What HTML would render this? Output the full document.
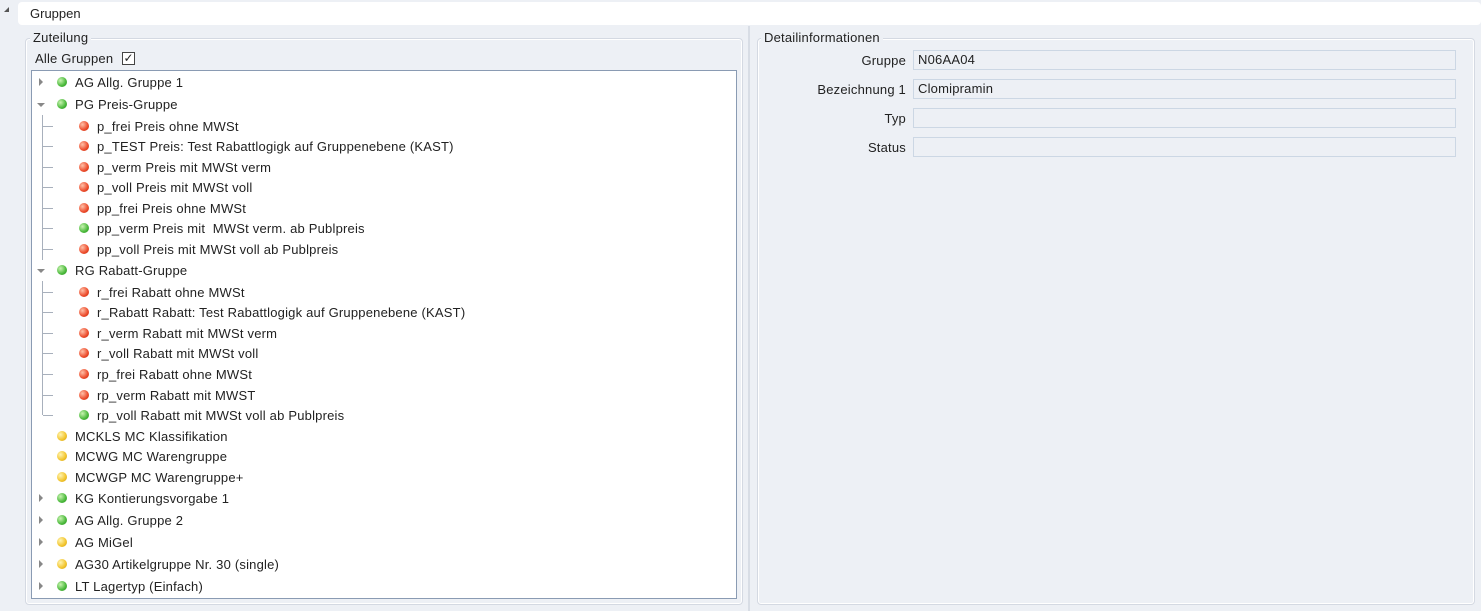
<!DOCTYPE html>
<html><head><meta charset="utf-8"><style>
*{margin:0;padding:0;box-sizing:border-box}
body{width:1481px;height:611px;background:#edf0f5;font-family:"Liberation Sans",sans-serif;font-size:13px;color:#222;position:relative;overflow:hidden}
.abs{position:absolute}
.hdr{left:18px;top:2px;width:1463px;height:23px;background:#fff;border-radius:4px}
.fs{border:1px solid #d4d9e2;border-radius:4px;box-shadow:inset 0 0 0 1px #fff}
.leg{background:#edf0f5;padding:0 3px;line-height:14px}
.tree{left:31px;top:70px;width:706px;height:529px;background:#fff;border:1px solid #8a9bb3}
.row{position:absolute;height:20px;line-height:20px;white-space:nowrap;letter-spacing:0.2px}
.dot{position:absolute;width:10px;height:10px;border-radius:50%}
.g{background:radial-gradient(circle at 35% 35%,#c8f4b0,#49b83a 60%,#2f8f25)}
.r{background:radial-gradient(circle at 35% 35%,#ffc0a8,#ec4a2a 60%,#b83010)}
.y{background:radial-gradient(circle at 35% 35%,#fff4b0,#f2c42c 60%,#c89810)}
.arr{position:absolute;width:0;height:0}
.ar{border-left:4px solid #888;border-top:4px solid transparent;border-bottom:4px solid transparent}
.ad{border-top:4px solid #888;border-left:4px solid transparent;border-right:4px solid transparent}
.vl{position:absolute;width:1px;background:#a8b0bc}
.hl{position:absolute;height:1px;width:10px;background:#a8b0bc}
.lbl{position:absolute;text-align:right;width:120px;left:786px;letter-spacing:0.2px}
.inp{position:absolute;left:913px;width:543px;height:20px;background:#edf0f5;border:1px solid #ccd7e4;padding-left:4px;line-height:18px;letter-spacing:0.2px}
</style></head><body>
<div class="abs" style="left:4px;top:7px;width:0;height:0;border-right:5px solid #555;border-top:5px solid transparent"></div>
<div class="abs hdr"></div>
<div class="abs" style="left:30px;top:6px">Gruppen</div>

<div class="abs fs" style="left:25px;top:38px;width:718px;height:567px"></div>
<div class="abs leg" style="left:30px;top:31px;letter-spacing:0.2px">Zuteilung</div>
<div class="abs" style="left:35px;top:51px;letter-spacing:0.2px">Alle Gruppen</div>
<div class="abs" style="left:122px;top:52px;width:13px;height:13px;border:1px solid #444;background:#fff;font-size:12px;line-height:11px;text-align:center">✓</div>
<div class="abs tree"></div>

<div class="abs" style="left:748px;top:26px;width:2px;height:585px;background:#d8dde5"></div>
<div class="abs fs" style="left:757px;top:38px;width:718px;height:567px"></div>
<div class="abs leg" style="left:761px;top:31px;letter-spacing:0.2px">Detailinformationen</div>
<div class="lbl" style="top:53px">Gruppe</div><div class="inp" style="top:50px">N06AA04</div>
<div class="lbl" style="top:82px">Bezeichnung 1</div><div class="inp" style="top:79px">Clomipramin</div>
<div class="lbl" style="top:111px">Typ</div><div class="inp" style="top:108px"></div>
<div class="lbl" style="top:140px">Status</div><div class="inp" style="top:137px"></div>

<div class="vl" style="left:42px;top:115px;height:145px"></div>
<div class="vl" style="left:42px;top:281px;height:134px"></div>

<div id="t"></div>
<script>
var rows=[
[82,0,'g','r','AG Allg. Gruppe 1'],
[104,0,'g','d','PG Preis-Gruppe'],
[126,1,'r','','p_frei Preis ohne MWSt'],
[146,1,'r','','p_TEST Preis: Test Rabattlogigk auf Gruppenebene (KAST)'],
[167,1,'r','','p_verm Preis mit MWSt verm'],
[187,1,'r','','p_voll Preis mit MWSt voll'],
[208,1,'r','','pp_frei Preis ohne MWSt'],
[228,1,'g','','pp_verm Preis mit &nbsp;MWSt verm. ab Publpreis'],
[249,1,'r','','pp_voll Preis mit MWSt voll ab Publpreis'],
[270,0,'g','d','RG Rabatt-Gruppe'],
[292,1,'r','','r_frei Rabatt ohne MWSt'],
[312,1,'r','','r_Rabatt Rabatt: Test Rabattlogigk auf Gruppenebene (KAST)'],
[333,1,'r','','r_verm Rabatt mit MWSt verm'],
[353,1,'r','','r_voll Rabatt mit MWSt voll'],
[374,1,'r','','rp_frei Rabatt ohne MWSt'],
[395,1,'r','','rp_verm Rabatt mit MWST'],
[415,1,'g','','rp_voll Rabatt mit MWSt voll ab Publpreis'],
[436,0,'y','','MCKLS MC Klassifikation'],
[456,0,'y','','MCWG MC Warengruppe'],
[477,0,'y','','MCWGP MC Warengruppe+'],
[498,0,'g','r','KG Kontierungsvorgabe 1'],
[520,0,'g','r','AG Allg. Gruppe 2'],
[542,0,'y','r','AG MiGel'],
[564,0,'y','r','AG30 Artikelgruppe Nr. 30 (single)'],
[586,0,'g','r','LT Lagertyp (Einfach)']];
var h='';
rows.forEach(function(r){var y=r[0],c=r[1]?22:0;
if(r[3]=='r')h+='<div class="arr ar" style="left:39px;top:'+(y-4)+'px"></div>';
if(r[3]=='d')h+='<div class="arr ad" style="left:37px;top:'+(y-1)+'px"></div>';
if(r[1])h+='<div class="hl" style="left:43px;top:'+y+'px"></div>';
h+='<div class="dot '+r[2]+'" style="left:'+(57+c)+'px;top:'+(y-5)+'px"></div>';
h+='<div class="row" style="left:'+(75+c)+'px;top:'+(y-9)+'px">'+r[4]+'</div>';});
document.getElementById('t').innerHTML=h;
</script>
</body></html>
